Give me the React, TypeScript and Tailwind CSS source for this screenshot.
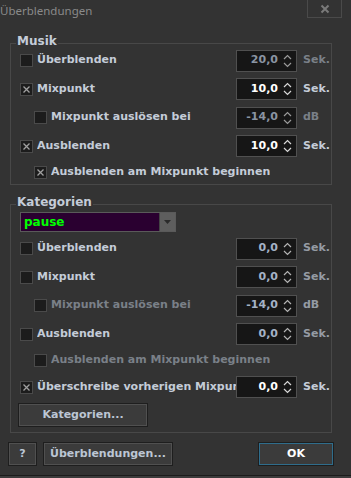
import React from "react";

const FONT = { fontFamily: '"DejaVu Sans", Verdana, sans-serif' };

type SpinProps = { value: string; on?: boolean; mid?: boolean; unit: string };

function Check({ checked }: { checked?: boolean }) {
  return (
    <div className="w-[13px] h-[13px] border border-[#4a4a4a] bg-[#1c1c1c] flex items-center justify-center shrink-0">
      {checked && (
        <svg width="9" height="9" viewBox="0 0 9 9">
          <path d="M1.5 1.5 L7.5 7.5 M7.5 1.5 L1.5 7.5" stroke="#a0a0a0" strokeWidth="1.3" />
        </svg>
      )}
    </div>
  );
}

function Spin({ value, on, mid, unit }: SpinProps) {
  const tc = on ? "text-white" : mid ? "text-[#a4b2c6]" : "text-[#8a94a2]";
  const ac = on ? "#d8d8d8" : mid ? "#b4b4b4" : "#9a9a9a";
  const uc = on ? "text-[#c4ccd8]" : mid ? "text-[#959ba4]" : "text-[#7a8088]";
  return (
    <div className="flex items-center shrink-0">
      <div className="w-[61px] h-[22px] border border-[#505050] bg-[#161616] flex items-center">
        <span className={`flex-1 text-right text-[11px] font-bold ${tc}`}>{value}</span>
        <svg width="9" height="16" viewBox="0 0 9 16" className="ml-[5px] mr-[4px]">
          <path d="M1 6 L4.5 2.5 L8 6" stroke={ac} strokeWidth="1.2" fill="none" />
          <path d="M1 10 L4.5 13.5 L8 10" stroke={ac} strokeWidth="1.2" fill="none" />
        </svg>
      </div>
      <span className={`ml-[6px] w-[28px] text-[11px] font-bold whitespace-nowrap ${uc}`}>{unit}</span>
    </div>
  );
}

function Row({
  h,
  indent,
  checked,
  label,
  dis,
  spin,
}: {
  h: string;
  indent?: boolean;
  checked?: boolean;
  label: string;
  dis?: boolean;
  spin?: SpinProps;
}) {
  return (
    <div className={`flex items-center ${h} ${indent ? "pl-[23px]" : "pl-[9px]"}`}>
      <Check checked={checked} />
      <span
        className={`ml-[4px] text-[11px] font-bold whitespace-nowrap overflow-hidden ${
          dis ? "text-[#7a8088]" : "text-[#c4ccd8]"
        } ${spin ? "flex-1" : ""}`}
      >
        {label}
      </span>
      {spin && <Spin {...spin} />}
    </div>
  );
}

function Group({ title, className, children }: { title: string; className: string; children: React.ReactNode }) {
  return (
    <div className={`relative border border-[#484848] ml-[10px] mr-[19px] ${className}`}>
      <span className="absolute left-[5px] top-[-11px] bg-[#333333] px-[1px] text-[12px] font-bold text-[#c4ccd8] leading-[16px]">
        {title}
      </span>
      {children}
    </div>
  );
}

function Btn({ children, className, ok }: { children: React.ReactNode; className: string; ok?: boolean }) {
  return (
    <div className={`border border-[#1e1e1e] ${className}`}>
      <div
        className={`w-full h-full flex items-center justify-center bg-[#3b3b3b] text-[11px] font-bold ${
          ok ? "border-[1.5px] border-[#2f6d8c] text-white" : "border border-[#505050] text-[#bcc6d4]"
        }`}
      >
        {children}
      </div>
    </div>
  );
}

export default function App() {
  return (
    <div className="w-[351px] h-[478px] bg-[#333333] relative overflow-hidden flex flex-col" style={FONT}>
      <div className="h-[20px] flex items-start">
        <span className="text-[11.5px] text-[#8a8a8a] mt-[2px]" style={{ fontFamily: '"Noto Sans", sans-serif' }}>
          Überblendungen
        </span>
        <div className="ml-auto mr-[9px] w-[35px] h-[18px] border border-[#4a4a4a] border-t-0 flex items-center justify-center">
          <svg width="10" height="10" viewBox="0 0 10 10">
            <path d="M1.5 1.5 L8.5 8.5 M8.5 1.5 L1.5 8.5" stroke="#7a7a7a" strokeWidth="2" />
          </svg>
        </div>
      </div>

      <Group title="Musik" className="mt-[23px] h-[142px] pt-[2px]">
        <Row h="h-[29px]" label="Überblenden" spin={{ value: "20,0", unit: "Sek." }} />
        <Row h="h-[28px]" checked label="Mixpunkt" spin={{ value: "10,0", on: true, unit: "Sek." }} />
        <Row h="h-[29px]" indent label="Mixpunkt auslösen bei" spin={{ value: "-14,0", unit: "dB" }} />
        <Row h="h-[28px]" checked label="Ausblenden" spin={{ value: "10,0", on: true, unit: "Sek." }} />
        <Row h="h-[24px]" indent checked label="Ausblenden am Mixpunkt beginnen" />
      </Group>

      <Group title="Kategorien" className="mt-[19px] h-[229px] pt-[7px]">
        <div className="ml-[9px] w-[156px] h-[20px] border border-[#5a5a5a] bg-[#2a0030] flex items-stretch">
          <span className="flex-1 text-[12px] font-bold text-[#00ff00] pl-[3px] leading-[18px]">pause</span>
          <div className="w-[16px] bg-[#5e5e5e] border-l border-[#444] flex items-center justify-center">
            <svg width="7" height="4" viewBox="0 0 7 4">
              <path d="M0 0 L7 0 L3.5 4 Z" fill="#2a2a2a" />
            </svg>
          </div>
        </div>
        <div className="h-[2px]" />
        <Row h="h-[29px]" label="Überblenden" spin={{ value: "0,0", mid: true, unit: "Sek." }} />
        <Row h="h-[28px]" label="Mixpunkt" spin={{ value: "0,0", mid: true, unit: "Sek." }} />
        <Row h="h-[29px]" indent dis label="Mixpunkt auslösen bei" spin={{ value: "-14,0", mid: true, unit: "dB" }} />
        <Row h="h-[28px]" label="Ausblenden" spin={{ value: "0,0", mid: true, unit: "Sek." }} />
        <Row h="h-[25px]" indent dis label="Ausblenden am Mixpunkt beginnen" />
        <Row h="h-[28px]" checked label="Überschreibe vorherigen Mixpunkt" spin={{ value: "0,0", on: true, unit: "Sek." }} />
        <Btn className="ml-[7px] mt-[2px] w-[130px] h-[24px]">Kategorien...</Btn>
      </Group>

      <div className="flex items-center mt-[9px] h-[24px]">
        <Btn className="ml-[8px] w-[29px] h-[24px]">?</Btn>
        <Btn className="ml-[6px] w-[130px] h-[24px]">Überblendungen...</Btn>
        <Btn ok className="ml-auto mr-[17px] w-[76px] h-[24px]">OK</Btn>
      </div>
      <div className="absolute left-0 right-0 top-[475px] h-[1px] bg-[#1c1c1c]" />
      <div className="absolute left-0 right-0 top-[476px] h-[2px] bg-[#3c3c3c]" />
    </div>
  );
}
